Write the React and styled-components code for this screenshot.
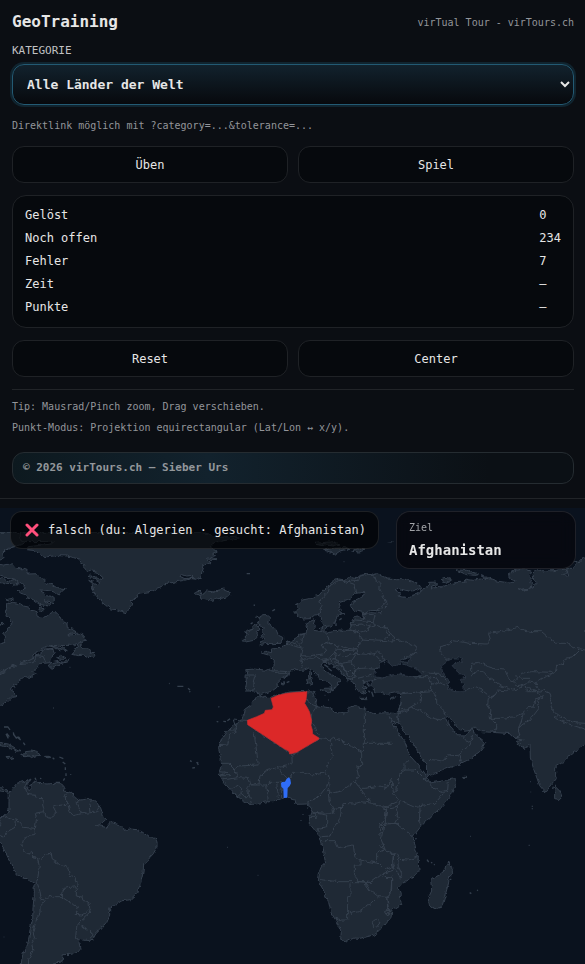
import { useState } from 'react';
import styled, { createGlobalStyle } from 'styled-components';

const stats = [
  ['Gelöst', '0'],
  ['Noch offen', '234'],
  ['Fehler', '7'],
  ['Zeit', '—'],
  ['Punkte', '—'],
];

function App() {
  const [category, setCategory] = useState('world');

  return (
    <Page>
      <GlobalStyle />
      <Panel>
        <Header>
          <Title>GeoTraining</Title>
          <Brand>virTual Tour - virTours.ch</Brand>
        </Header>
        <Field>
          <Label htmlFor="category">KATEGORIE</Label>
          <Select id="category" value={category} onChange={(e) => setCategory(e.target.value)}>
            <option value="world">Alle Länder der Welt</option>
          </Select>
        </Field>
        <Hint>Direktlink möglich mit ?category=...&amp;tolerance=...</Hint>
        <ButtonRow>
          <Button type="button">Üben</Button>
          <Button type="button">Spiel</Button>
        </ButtonRow>
        <StatsBox>
          <Stats>
            <tbody>
              {stats.map(([name, value]) => (
                <tr key={name}>
                  <StatName scope="row">{name}</StatName>
                  <StatValue>{value}</StatValue>
                </tr>
              ))}
            </tbody>
          </Stats>
        </StatsBox>
        <ButtonRow>
          <Button type="button">Reset</Button>
          <Button type="button">Center</Button>
        </ButtonRow>
        <Tips>
          <p>Tip: Mausrad/Pinch zoom, Drag verschieben.</p>
          <p>Punkt-Modus: Projektion equirectangular (Lat/Lon ↔ x/y).</p>
        </Tips>
        <Copyright>© 2026 virTours.ch – Sieber Urs</Copyright>
      </Panel>
      <Stage>
        <WorldMap />
        <Toast role="status">
          <Cross />
          falsch (du: Algerien · gesucht: Afghanistan)
        </Toast>
        <Target>
          <TargetLabel>Ziel</TargetLabel>
          <TargetName>Afghanistan</TargetName>
        </Target>
      </Stage>
    </Page>
  );
}

export default App;

function Cross() {
  return (
    <svg width="14" height="14" viewBox="0 0 14 14" aria-hidden="true">
      <path d="M2 2 12 12M12 2 2 12" stroke="#ff4f7b" strokeWidth="3" strokeLinecap="round" />
    </svg>
  );
}

// The map uses three units per pixel. Borders are grouped by region, each with its own origin.
function WorldMap() {
  return (
    <Map viewBox="0 24 1755 1368" preserveAspectRatio="xMidYMin slice" role="img" aria-label="Weltkarte">
      {/* ragged coast lines */}
      <filter id="rough" x="0" y="0" width="100%" height="100%" colorInterpolationFilters="sRGB">
        <feTurbulence type="fractalNoise" baseFrequency="0.07" numOctaves="2" seed="4" />
        <feDisplacementMap in="SourceGraphic" scale="14" xChannelSelector="R" yChannelSelector="G" />
      </filter>
      <g filter="url(#rough)">
        <Land>
          {/* North America */}
          <path d="M-5 433 15 427 16 412 8 402 30 381 37 366 30 353 17 348 23 325 22 311 38 307 60 311 71 318 85 321 99 332 108 335 112 350 129 352 143 348 150 338 162 331 178 347 187 365 201 372 202 383 217 387 231 395 213 400 206 405 230 403 240 402 253 405 251 414 257 421 244 424 224 434 200 437 173 436 143 439 126 445 110 455 95 475 115 465 130 452 147 447 162 450 166 460 158 465 156 475 146 485 156 488 176 484 190 487 207 475 205 485 185 491 167 497 153 505 145 498 151 488 133 490 122 490 111 502 99 515 107 523 90 532 76 530 63 541 54 546 49 552 40 553 46 566 37 558 31 568 42 576 45 583 48 590 34 592 20 605 -5 623Z" />
          <path d="M218 463 227 447 239 428 247 424 241 439 250 447 263 446 274 452 270 460 283 457 285 468 277 475 270 468 260 472 250 465 236 467Z" />
          <path d="M-5 193 14 195 34 191 48 207 61 204 81 211 86 222 113 221 121 233 137 239 130 246 142 251 161 255 173 263 196 266 184 276 178 285 167 279 150 273 133 270 119 271 134 280 138 287 153 289 163 296 160 310 151 305 134 302 151 313 145 318 118 313 100 299 83 293 77 284 63 280 54 273 80 261 65 251 49 252 47 239 31 233 12 232 -5 226Z" />
          <path d="M-5 97H44L100 112 65 134 30 144 15 153 8 160 12 174-5 183ZM-5 240 8 236 25 244 43 238 55 247 42 256 26 250 12 252 2 247M17 300 28 293 40 298 28 303ZM115 332 123 320 136 327 127 336ZM151 438 190 444 202 452 180 449ZM170 472 185 466 198 474 180 478ZM5 365 12 373 4 379Z" />
          <path d="M62 97H605L660 112 710 108 718 114 660 124 643 128 630 138 637 148 652 153 638 160 649 166 632 171 650 179 622 177 632 188 619 194 604 194 610 204 606 217 604 230 586 238 565 235 580 226 560 228 542 222 540 229 554 236 582 233 550 242 527 245 497 251 484 260 470 265 459 273 441 276 420 279 411 283 413 291 402 296 393 306 396 317 389 326 378 338 365 334 350 329 332 327 317 316 306 307 293 292 281 278 277 259 284 270 278 251 266 241 280 247 290 253 301 247 291 240 264 232 268 222 290 233 306 243 309 233 291 217 275 211 260 213 251 204 255 195 243 188 239 178 221 173 204 168 170 167 142 170 120 165 107 152 80 149 85 140 155 132 160 124 90 125 60 120Z" />
          <path d="M583 280 597 270 602 275 607 286 619 273 640 275 654 271 672 267 684 272 692 283 682 291 655 296 636 301 615 296 600 294 605 288 590 283Z" />

          {/* Caribbean */}
          <path d="M-5 725 11 730 25 732 39 740 51 748 61 752 49 754 31 746 14 739-5 736ZM76 755 94 753 110 757 122 765 105 768 94 773 85 769 72 770 62 766 79 764ZM18 770 31 769 42 773 31 776 21 774ZM134 769 150 769 152 773 135 773Z" />

          {/* South America */}
          <path d="M-5 864 5 863 22 870 29 878 37 868 48 852 62 847 78 842 93 834 86 847 80 855 83 868 90 873 95 865 90 853 107 843 116 850 143 852 164 850 185 852 194 862 190 873 205 875 214 879 225 893 240 900 256 898 274 898 290 908 302 924 310 948 318 958 303 972 289 976 318 982 330 967 354 973 371 984 372 991 389 987 412 989 430 998 446 1010 465 1012 471 1026 471 1044 462 1059 449 1073 440 1087 431 1093 429 1117 426 1133 420 1156 412 1172 403 1193 395 1199 366 1202 344 1216 329 1226 329 1245 319 1267 301 1288 287 1302 280 1315 269 1322 248 1320 232 1318 240 1330 243 1345 233 1357 213 1363 190 1364 185 1387 160 1388 150 1410 60 1410 69 1360 83 1330 88 1307 91 1285 98 1260 99 1222 103 1183 102 1150 80 1137 57 1127 42 1110 33 1088 21 1067 13 1047-5 1022V985L3 975-5 960 12 946 27 930 27 905 28 884 14 875-5 872Z" />

          {/* Europe, Asia and Africa */}
          <path d="M885 315 898 310 907 300 928 296 941 290 957 286 966 275 981 262 994 245 1013 237 1035 239 1050 231 1066 235 1081 223 1103 220 1117 225 1132 221 1145 228 1160 234 1186 236 1208 236 1235 243 1256 253 1263 264 1248 272 1228 273 1205 268 1192 265 1185 269 1203 278 1197 288 1219 293 1240 285 1258 281 1265 267 1285 263 1286 247 1310 246 1317 254 1297 257 1294 264 1320 262 1350 251 1377 247 1399 247 1393 237 1420 241 1438 237 1465 239 1451 233 1443 227 1465 234 1490 243 1530 249 1550 244 1533 238 1526 228 1531 216 1550 210 1576 208 1592 214 1586 223 1594 233 1589 247 1598 250 1594 261 1579 269 1554 266 1566 272 1586 267 1604 258 1609 247 1601 237 1599 219 1610 209 1632 213 1660 212 1697 207 1703 218 1685 221 1706 231 1700 205 1716 205 1730 191 1721 186 1740 184 1760 170V732L1741 740 1730 753 1715 760 1693 784 1667 800 1667 831 1661 847 1642 873 1635 876 1619 857 1601 807 1591 773 1590 733 1578 745 1563 739 1549 724 1570 720 1549 717 1531 701 1478 697 1446 695 1429 684 1421 681 1415 691 1391 694 1368 678 1352 656 1343 645 1335 652 1345 672 1359 688 1371 703 1370 707 1398 708 1404 700 1416 683 1423 700 1456 727 1441 753 1410 777 1380 791 1337 808 1290 827 1281 825 1279 798 1254 754 1231 716 1211 692 1197 667 1194 651 1193 671 1185 671 1171 650 1178 672 1190 688 1215 728 1229 766 1248 788 1272 816 1283 835 1290 849 1365 836 1367 853 1350 889 1327 919 1295 947 1262 980 1245 1002 1240 1013 1247 1045 1254 1069 1257 1114 1243 1128 1213 1145 1195 1166 1201 1184 1203 1213 1176 1231 1173 1252 1155 1275 1137 1295 1119 1306 1080 1315 1062 1314 1042 1323 1022 1318 1024 1298 1007 1260 993 1238 986 1207 970 1170 955 1143 959 1114 976 1087 970 1048 960 1010 925 967 930 948 935 928 931 917 920 912 889 913 884 897 865 892 847 895 820 905 802 905 757 914 731 903 702 882 671 846 657 820 665 797 663 778 655 743 668 711 681 692 698 677 724 664 729 649 733 629 755 613 775 584 790 592 812 592 834 584 870 576 919 574 933 572 947 576 939 590 950 602 947 616 965 620 987 623 1007 637 1031 641 1043 635 1048 622 1068 617 1088 626 1123 641 1156 638 1176 640 1190 638 1202 615 1205 590 1203 580 1183 579 1162 583 1142 576 1127 576 1115 563 1110 547 1126 540 1107 544 1090 547 1100 566 1087 562 1100 576 1082 581 1071 567 1058 546 1046 539 1032 528 1021 514 1006 502 988 492 983 485 970 484 964 490 968 507 985 521 1005 528 1023 543 1013 546 1011 562 998 573 990 553 973 542 956 531 938 512 928 504 911 511 887 508 869 514 867 524 844 535 831 548 832 561 815 574 796 579 782 584 765 573 735 573 740 552 738 531 743 519 740 509 765 507 790 510 818 511 822 497 823 479 812 472 805 465 784 459 797 454 815 458 814 447 841 445 857 430 875 422 889 413 898 403 920 399 920 384 916 372 931 364 945 358 940 372 949 380 942 391 966 395 990 397 1018 390 1046 391 1054 379 1054 369 1067 349 1079 348 1084 357 1095 355 1087 341 1112 338 1143 340 1137 331 1111 332 1092 338 1061 332 1054 319 1057 305 1081 293 1097 283 1089 277 1067 280 1055 292 1038 302 1020 308 1014 324 1025 333 1032 339 1013 347 1005 369 992 378 974 380 966 369 957 344 944 345 930 356 911 357 894 349 884 335 898 326Z" />

          {/* Islands around Europe */}
          <path d="M776 352 770 348 778 360 772 369 784 377 793 383 788 393 791 404 784 410 793 421 777 427 784 433 801 430 817 431 842 430 851 417 851 409 835 405 828 389 812 377 803 370 810 355 802 347 786 347ZM770 373 758 387 742 393 737 399 745 403 730 419 736 426 762 421 770 413 772 394 780 388ZM957 386 970 382 976 375 982 384 970 393ZM925 519 930 514 932 528 927 535ZM920 538 932 531 936 549 923 554ZM961 566 995 564 989 579 968 573ZM1080 595 1104 595 1099 599 1080 598ZM1168 596 1187 590 1178 600ZM845 548 854 546 851 552Z" />
          <path d="M970 150 1000 145 1029 143 1049 145 1020 153 1006 163 987 155ZM1055 153 1070 146 1095 150 1075 156ZM1320 240 1335 235 1357 239 1340 246ZM1368 210 1400 211 1432 221 1429 226 1400 224ZM945 130 1000 125 1020 132 1000 138ZM1162 127 1182 125M1720 187 1745 181" />

          {/* Indian ocean */}
          <path d="M1347 1087 1355 1102 1358 1121 1349 1129 1345 1152 1328 1212 1322 1222 1305 1226 1289 1218 1284 1195 1295 1173 1292 1138 1318 1125 1335 1110 1337 1093ZM1664 858 1680 874 1685 888 1677 898 1664 896ZM1388 829 1400 829 1397 832 1389 832Z" />
        </Land>

        <Lakes>
          <path d="M1125 524 1127 506 1140 498 1143 487 1157 478 1168 488 1178 496 1191 492 1200 495 1204 488 1212 493 1250 507 1266 523 1245 532 1218 528 1200 522 1170 526 1150 534 1125 531Z" />
          <path d="M1198 482 1213 474 1230 474 1224 487 1210 486Z" />
          <path d="M1323 496 1340 483 1358 474 1384 474 1386 486 1368 490 1356 497 1369 510 1375 521 1390 522 1398 531 1387 535 1381 541 1390 551 1393 575 1365 575 1343 567 1346 548 1345 539 1329 520Z" />
          <path d="M1101 545 1114 540 1118 550 1108 558ZM93 852 97 866 89 872 86 859Z" />
        </Lakes>

        <Borders>
          {/* Americas */}
          <path d="M-5 524 30 505 60 490 100 488 112 467 130 470 137 488M95 475 60 490M-5 520 48 493M110 455 130 447 160 445" />
          <g transform="translate(0 690)">
            <path d="M85 148 75 170 82 193 105 196 110 205 130 206 128 225 134 245 106 250 110 268 107 285 107 300 103 295 70 292 60 280 52 271 30 266 12 258" />
            <path d="M134 245 139 260 150 262 170 250 160 231 165 228 200 223 205 225 197 210 195 198 205 183" />
            <path d="M205 225 210 245 220 257 245 251 290 246 298 228M236 207 229 220 238 240 245 251M274 210 268 230 270 248" />
            <path d="M50 271 45 292 20 306 10 321 0 318M107 285 105 314 85 316 70 331 65 348 76 367 88 372 97 367 98 383 112 385" />
            <path d="M98 383 120 387 135 378 154 370 157 390 185 405 204 412 209 436 226 443 226 455 235 461 229 475 226 470 192 475 185 490 184 500 166 500 160 505 150 499 132 505 125 510" />
            <path d="M112 385 118 408 114 440 106 455 112 460 120 485 125 510 133 515 120 530 120 550 106 580 99 605 105 626 95 640 99 662 86 688 85 710" />
            <path d="M184 500 215 521 235 530 231 545 225 553 245 555 262 545 269 535 267 518 250 515 246 501 229 498 229 475M269 535 274 545 240 576 231 587 226 625 232 633M240 585 279 610 271 625M287 609 300 590 308 585" />
          </g>
          {/* Europe */}
          <g transform="translate(585 0)">
            <path d="M370 345 378 320 375 303 400 275 405 257 425 244 440 240M440 240 455 250 465 240 490 242 495 228M440 240 480 255 485 280M495 228 525 222 540 235 537 225 545 245 555 250 555 270 575 305 545 335" />
            <path d="M500 340 540 345 535 365 540 375M470 359 500 362 535 365M468 375 500 372 520 380 520 390 500 396 465 390M520 380 540 375 572 385 568 375 585 400 600 410 590 423 498 417" />
            <path d="M440 392 490 396 500 415 492 440 488 450 457 444 440 440 428 438 405 430 395 397M312 405 325 402 320 425 310 437 325 444 320 467 347 468 360 465 385 462 395 450 382 440 378 435 400 429 425 438 430 445" />
            <path d="M265 435 285 425 300 428 310 437M275 430 310 442 325 444M300 418 312 427M320 467 317 490 325 502M317 485 335 477 350 478 365 472 360 465M365 472 380 478 403 475 420 460 423 450 445 452 485 450 488 456 478 463 450 470 425 462M420 460 418 477 400 480 382 485" />
            <path d="M418 477 440 490 467 485 475 475 485 460 510 463 535 458 560 485M467 485 475 500 483 507 520 503 547 505M405 480 418 495 445 500 450 515M418 485 440 490 450 515 460 530 480 525 483 507M450 515 465 510 480 525 487 535 530 525M450 530 460 540 480 530M535 458 550 455 560 467 570 490M490 440 492 425M455 545 465 535" />
            <path d="M280 515 235 512M230 515 255 520 280 520M155 525 180 525 175 545 178 555 170 575M590 423 620 420 640 430 662 440 665 455 640 470 625 475" />
          </g>
          {/* Asia */}
          <g transform="translate(1155 0)">
            <path d="M0 300 8 310 0 325M0 395 15 405 0 415M190 480 165 455 163 440 185 435 205 422 255 430 305 432 317 420 310 400 345 395 400 382 415 390 440 395 470 395 490 412 515 430 545 430 575 445 600 450" />
            <path d="M585 450 565 470 540 475 535 490 515 495 510 520 480 530 450 550 460 565 475 570 495 580 500 595 495 605 500 625 520 645 545 660 570 668 600 670M600 688 555 673 510 655 520 645" />
            <path d="M260 528V490L280 487 310 500 335 508 360 510 370 535 390 545 412 520 440 515 505 517M260 528 275 515 295 515 315 535 350 558 372 566 362 572 340 570 330 585 318 592 290 570 265 562 238 572" />
            <path d="M390 545 395 557 410 555 430 545 450 550M390 530 410 535 435 535M372 566 385 570 405 565 420 555 425 575 455 575 475 590 450 597 445 620 425 625 415 640 390 650 350 655 315 655 318 630 308 615 310 595 330 585" />
            <path d="M315 655 335 670 335 685 320 695M415 640 400 690 405 710 390 715M475 590 455 602 462 625 435 660 410 675 400 690M420 575 430 565 455 575 475 570" />
            <path d="M110 515 140 520 160 520 180 535 190 560M80 530 115 530 130 530 135 545 150 552 165 548 180 555M135 530 155 535 165 550M140 545 140 572 155 590 155 610 175 630 180 645M140 572 110 575 75 578 50 582 48 605M110 575 105 605 70 625 48 630M48 605 40 640 55 635 80 622 100 628 145 655 165 660 180 650" />
            <path d="M40 655 45 635M235 710 245 725 260 720 265 690M130 778 170 782 190 765 220 763 255 735 260 715M220 763 228 785" />
          </g>
          {/* Africa */}
          <g transform="translate(585 690)">
            <path d="M340-115 330-95 355-75 365-70 350-50 348-25 370 15M100 0H125L115-30 160-25M125 0 105 15 98 45 70 47M182 0 250 45 285 70 302 70 330 50 372 25M178 10 190 105 128 108 120 120 100 100 80 100" />
            <path d="M290 70 292 100 280 107 250 112 215 122 195 140 192 158 165 165 160 145 128 143 120 120M128 143 100 148 85 148M250 112 260 130 280 147 292 130 325 130 350 135 387 130 400 100 412 80 405 30 372 25M405 30 415 22 500 65 508 60V-70M508 40H590M500 65V105L485 110 490 140 480 155" />
            <path d="M390 130 405 150 395 170 375 195 365 205 345 212 338 222M400 130 405 165 400 185 410 190 440 182 480 155 495 175 510 175 555 168 570 175 590 145 590 170M400 185 402 210 415 240 415 250 350 248M495 175 510 200 535 220 550 230 590 233 612 228" />
            <path d="M415 245 420 235 440 232 445 220 475 222 500 215 535 220M440 232 435 270 412 300 405 318 380 320M350 250H365V262H345M365 250 395 255 395 290 370 295 370 305M378 332 420 332 430 353 475 345 480 385 495 390 550 400 560 410 545 395 545 370 570 358 555 320 553 290 570 265 575 235" />
            <path d="M498 390 498 405 478 405 478 440 490 455 525 458 555 435 590 445M370 448 430 455 520 455M465 460 465 500 458 500 458 570 440 570 422 565M458 530 465 550 490 545 505 535 530 520 550 500 525 480 510 458M550 500 575 502 590 480 590 440M575 502 582 540 575 540M568 545 580 540 585 552 575 555ZM532 578 545 568 555 575 545 588 535 590ZM553 285 570 282 563 320M555 350 595 370 597 420 560 432M553 300 565 290 567 305 555 310M560 233 575 240 570 282 612 280" />
            <path d="M170 223 160 190 158 175 165 165M165 165 215 165 220 157 258 157 260 205M215 165 218 190 220 217M245 157 250 200M110 180 125 165 140 175 138 190 130 198 115 190M138 190 150 200 162 200M75 125 100 128 78 135M75 137 105 137" />
          </g>
          <g transform="translate(1155 690)">
            <path d="M75 85 60 100 60 120 90 120 115 145 130 155 140 170 175 185 188 180 190 155M60 120 45 130 40 150 35 180 25 190 40 210 85 230 150 220 180 185M115 145 125 140M25 190 20 150 10 160 0 165M45 215 32 245 40 265 32 280 85 320M0 280 32 280M105 230 103 275 110 290M102 380 70 390 45 388 35 370 25 372 22 410 35 420 45 445 50 430 40 410 38 390M22 410 0 420M0 360 25 372M0 440 20 445 18 490 5 505 10 545 5 555M38 215 0 232" />
          </g>
        </Borders>
      </g>

      {/* tiny islands */}
      <Specks>
        <path d="M12 681 24 681 30 690M20 700 28 710M40 702 50 716M55 710 60 716M18 702 25 715M40 697 42 706M50 710 62 720M70 728 75 735M158 773 163 778M178 771 190 776M188 786 196 792M196 802V810M198 820V828M194 835 190 842M212 822V824M105 833 108 840M120 835 124 836M167 847H180M532 559H550M564 565 570 570M568 574 571 576M507 550 509 551M160 624H162M209 502H211M570 782 575 785M592 788 595 790M577 804 585 803M740 221 750 221M761 315 765 316M817 333 825 328M650 664 655 666M670 664 678 665M682 662 690 656M655 620 658 621M590 786 595 795M922 923 924 925M903 960V962M909 943V945M682 1042H684M773 1126H775M12 1310V1312M1411 1009H1413M1586 1036H1589M1590 845H1592M1592 875V877M1597 917V920M1597 925V928M1281 1079 1286 1086M1293 1087 1297 1089M1302 1093 1304 1095M1409 1178 1414 1181M1431 1172 1434 1170M1248 1014V1018M1246 1041V1045M1660 860 1658 867M1031 185H1033M850 546 855 547M860 548 868 544M1018 360 1025 355M1008 370V378M1088 540 1096 550M1100 550 1108 560M1105 572 1110 577M1115 575 1120 590M960 570H964M1352 1136V1140M973 494 985 502M985 505 995 513M752 372 758 368M1088 573 1093 580M1101 560 1098 567M985 600H987M974 586H976" />
      </Specks>

      <Wrong d="M813 595 834 586 860 580 888 577 921 575 918 600 914 610 923 625 929 637 935 662 933 676 937 690 938 702 957 714 956 718 920 739 890 757 869 762 867 754 850 745 743 674 742 661 770 650 793 640 796 631 816 629 820 621Z" />
      <Searched d="M843 850 846 846 855 845 860 836 867 832 871 838 873 850 869 858 863 864 862 893 851 894 850 866 844 860Z" />
    </Map>
  );
}

const GlobalStyle = createGlobalStyle`
  * {
    box-sizing: border-box;
  }

  body {
    margin: 0;
    background: #0b0e13;
    color: #e6e6e6;
    font: 12px/16px 'DejaVu Sans Mono', monospace;
  }

  p,
  h1 {
    margin: 0;
  }
`;

const Page = styled.div`
  display: flex;
  flex-direction: column;
  min-height: 100vh;
`;

const Panel = styled.aside`
  display: flex;
  flex-direction: column;
  gap: 12px;
  padding: 12px 11px 14px 12px;
  border-bottom: 1px solid #212428;
`;

const Header = styled.header`
  display: flex;
  justify-content: space-between;
  align-items: center;
`;

const Title = styled.h1`
  font-size: 16px;
  line-height: 19px;
`;

const Brand = styled.span`
  padding-top: 3px;
  font-size: 10px;
  color: #93959a;
`;

const Field = styled.div`
  display: flex;
  flex-direction: column;
  gap: 5px;
`;

const Label = styled.label`
  font-size: 11px;
  color: #c0c1c3;
`;

const Select = styled.select`
  width: 100%;
  height: 41px;
  padding: 0 10px;
  border: 1px solid #235a73;
  border-radius: 12px;
  outline: none;
  background: linear-gradient(#12222d, #07090d);
  box-shadow: 0 0 0 2px #10242f;
  color: #e6e6e6;
  font: bold 13px 'DejaVu Sans Mono', monospace;
`;

const Hint = styled.p`
  font-size: 10px;
  line-height: 17px;
  color: #93959a;
`;

const ButtonRow = styled.div`
  display: grid;
  grid-template-columns: 1fr 1fr;
  gap: 10px;
`;

const Button = styled.button`
  height: 37px;
  border: 1px solid #1f2226;
  border-radius: 12px;
  background: #06090d;
  color: inherit;
  font: inherit;
  cursor: pointer;
`;

const StatsBox = styled.section`
  padding: 8px 12px;
  border: 1px solid #1f2226;
  border-radius: 14px;
  background: #06090d;
`;

const Stats = styled.table`
  width: 100%;
  border-collapse: collapse;
  line-height: 23px;
`;

const StatName = styled.th`
  width: 100%;
  padding: 0;
  font-weight: normal;
  text-align: left;
`;

const StatValue = styled.td`
  padding: 0;
`;

const Tips = styled.div`
  padding: 6px 0 2px;
  border-top: 1px solid #212428;
  font-size: 10px;
  line-height: 21px;
  color: #93959a;
`;

const Copyright = styled.footer`
  padding: 7px 10px;
  border: 1px solid #252c31;
  border-radius: 12px;
  background: linear-gradient(90deg, #0d191f, #12222d 35%, #0b1015 85%);
  font-size: 11px;
  font-weight: bold;
  color: #93979b;
`;

const Stage = styled.main`
  position: relative;
  display: flex;
  flex: 1;
  min-height: 465px;
  padding-top: 9px;
`;

const Map = styled.svg`
  flex: 1;
  width: 100%;
  min-width: 0;
  background: #0a121e;
  stroke-linejoin: round;
`;

const Land = styled.g`
  fill: #1f2935;
  stroke: #35404e;
  stroke-width: 3;
`;

const Lakes = styled.g`
  fill: #0a121e;
  stroke: #35404e;
  stroke-width: 2;
`;

const Borders = styled.g`
  fill: none;
  stroke: #35404e;
  stroke-width: 3;
`;

const Specks = styled.g`
  fill: none;
  stroke: #35404e;
  stroke-width: 4;
`;

const Wrong = styled.path`
  fill: #dc2828;
  stroke: #c92a2f;
  stroke-width: 2;
`;

const Searched = styled.path`
  fill: #2f6df6;
`;

const Toast = styled.div`
  position: absolute;
  top: 12px;
  left: 10px;
  display: flex;
  align-items: center;
  gap: 9px;
  height: 38px;
  padding: 0 12px 0 14px;
  border: 1px solid rgba(255, 255, 255, 0.1);
  border-radius: 12px;
  background: rgba(0, 0, 0, 0.6);
  white-space: nowrap;
`;

const Target = styled.div`
  position: absolute;
  top: 12px;
  right: 9px;
  width: 180px;
  padding: 8px 12px;
  border: 1px solid rgba(255, 255, 255, 0.1);
  border-radius: 14px;
  background: rgba(5, 6, 12, 0.7);
  backdrop-filter: blur(8px);
`;

const TargetLabel = styled.div`
  font-size: 10px;
  color: #a3a5a9;
`;

const TargetName = styled.div`
  padding-top: 4px;
  font-size: 14px;
  font-weight: bold;
  line-height: 20px;
`;
